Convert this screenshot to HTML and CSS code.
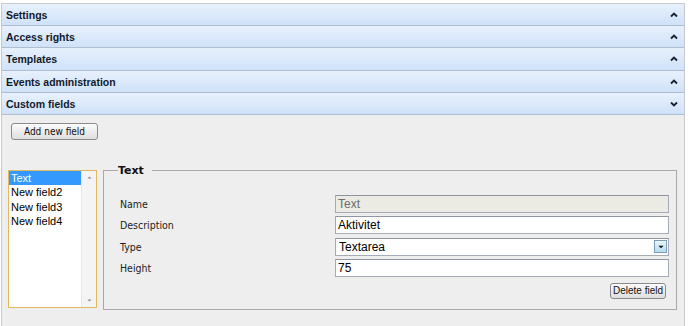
FILE: index.html
```html
<!DOCTYPE html>
<html>
<head>
<meta charset="utf-8">
<link rel="stylesheet" href="styles.css">
</head>
<body>
<div class="panel">
  <div class="hdr"><span>Settings</span><svg class="chev" viewBox="0 0 8 6"><path d="M1 4.5 L4 1.5 L7 4.5" /></svg></div>
  <div class="hdr"><span>Access rights</span><svg class="chev" viewBox="0 0 8 6"><path d="M1 4.5 L4 1.5 L7 4.5" /></svg></div>
  <div class="hdr"><span>Templates</span><svg class="chev" viewBox="0 0 8 6"><path d="M1 4.5 L4 1.5 L7 4.5" /></svg></div>
  <div class="hdr"><span>Events administration</span><svg class="chev" viewBox="0 0 8 6"><path d="M1 4.5 L4 1.5 L7 4.5" /></svg></div>
  <div class="hdr"><span>Custom fields</span><svg class="chev" viewBox="0 0 8 6"><path d="M1 1.5 L4 4.5 L7 1.5" /></svg></div>
  <div class="content">
    <button class="btn add">Add new field</button>
    <div class="row">
      <div class="listbox">
        <ul class="items">
          <li class="sel">Text</li>
          <li>New field2</li>
          <li>New field3</li>
          <li>New field4</li>
        </ul>
        <div class="sb">
          <svg class="sbarrow" viewBox="0 0 7 4"><path d="M0.5 3.5 L3.5 0.5 L6.5 3.5 Z"/></svg>
          <svg class="sbarrow" viewBox="0 0 7 4"><path d="M0.5 0.5 L3.5 3.5 L6.5 0.5 Z"/></svg>
        </div>
      </div>
      <fieldset class="fs">
        <legend>Text</legend>
        <div class="form">
          <label>Name</label><div class="inp dis">Text</div>
          <label>Description</label><div class="inp">Aktivitet</div>
          <label>Type</label><div class="inp select"><span>Textarea</span><span class="dd"><svg viewBox="0 0 7 4"><path d="M0.5 0.5 L3.5 3.5 L6.5 0.5 Z"/></svg></span></div>
          <label>Height</label><div class="inp">75</div>
        </div>
        <div class="actions"><button class="btn del">Delete field</button></div>
      </fieldset>
    </div>
  </div>
</div>
</body>
</html>
```
FILE: styles.css
```css
html, body { margin: 0; padding: 0; background: #ffffff; }
body { font-family: "DejaVu Sans Condensed", "DejaVu Sans", sans-serif; }
.panel {
  margin: 3px 0 0 1px;
  width: 684px;
  border: 1px solid #c6cacf;
  border-bottom: none;
  height: 330px;
  background: #eeeeee;
  box-sizing: border-box;
}
.hdr {
  height: 22.2px;
  box-sizing: border-box;
  border-bottom: 1px solid #aebdd0;
  background: linear-gradient(#e8f1fd, #cfe2f8);
  display: flex;
  align-items: center;
  justify-content: space-between;
  padding: 1px 6px 0 4px;
  font-family: "Liberation Sans", Arial, sans-serif;
  font-size: 10.5px;
  font-weight: bold;
  color: #121a2c;
}
.chev { width: 8px; height: 6px; }
.chev path { fill: none; stroke: #1a2236; stroke-width: 1.9; }
.content { padding: 8px 0 0 6px; }
.btn {
  font-family: "DejaVu Sans Condensed", "DejaVu Sans", sans-serif;
  font-size: 10px;
  color: #111;
  border: 1px solid #8a8a8a;
  border-radius: 3px;
  background: linear-gradient(#fbfbfb, #dedede);
  padding: 0;
  white-space: nowrap;
}
.add { display: block; width: 87px; height: 17px; margin-left: 3px; }
.row { display: flex; margin-top: 30px; align-items: flex-start; }
.listbox {
  width: 89px; height: 138px;
  box-sizing: border-box;
  border: 1px solid #e0b860;
  background: #fff;
  display: flex;
  flex: none;
}
.items {
  list-style: none; margin: 0; padding: 0;
  flex: 1;
  font-family: "Liberation Sans", Arial, sans-serif;
  font-size: 11px;
  color: #000;
}
.items li { height: 14.5px; line-height: 14px; padding-left: 2px; }
.items li.sel { background: #3399ff; color: #fff; }
.sb {
  width: 14px;
  background: #f4f4f4;
  border-left: 1px solid #e6e6e6;
  display: flex; flex-direction: column; justify-content: space-between; align-items: center;
  padding: 5px 0 5px 0;
}
.sbarrow { width: 5px; height: 3px; }
.sbarrow path { fill: #8f8f8f; }
.fs {
  margin: -6px 0 0 6px;
  width: 574px;
  height: 146px;
  box-sizing: border-box;
  border: 1px solid #a9a9a9;
  padding: 0 7px 0 16px;
}
.fs legend {
  font-family: "DejaVu Sans", sans-serif;
  font-weight: bold;
  font-size: 11px;
  padding: 0 8px 0 0;
  margin-left: -2px;
  color: #111;
}
.form {
  display: grid;
  grid-template-columns: 215px 334px;
  row-gap: 3.3px;
  margin-top: 18px;
  align-items: center;
}
.form label {
  font-family: "DejaVu Sans Condensed", "DejaVu Sans", sans-serif;
  font-size: 10.5px;
  color: #222;
}
.inp {
  height: 18px;
  box-sizing: border-box;
  border: 1px solid #a5acb5;
  border-top-color: #8e959e;
  background: #fff;
  font-family: "Liberation Sans", Arial, sans-serif;
  font-size: 12px;
  line-height: 16px;
  padding-left: 2px;
  color: #000;
}
.inp.dis { background: #ebebe4; color: #6d6d6d; }
.inp.select { display: flex; justify-content: space-between; align-items: center; padding-left: 3px; }
.dd {
  width: 13px; height: 13px; margin-right: 1px;
  background: linear-gradient(#eaf5fc, #b8dcf0);
  border: 1px solid #7a9cb8;
  box-sizing: border-box;
  display: flex; align-items: center; justify-content: center;
}
.dd svg { width: 6px; height: 4px; }
.dd path { fill: #101010; }
.actions { display: flex; justify-content: flex-end; margin-top: 6px; padding-right: 3px; }
.del { width: 56px; height: 16px; font-family: "Liberation Sans", Arial, sans-serif; font-size: 10px; }
```
